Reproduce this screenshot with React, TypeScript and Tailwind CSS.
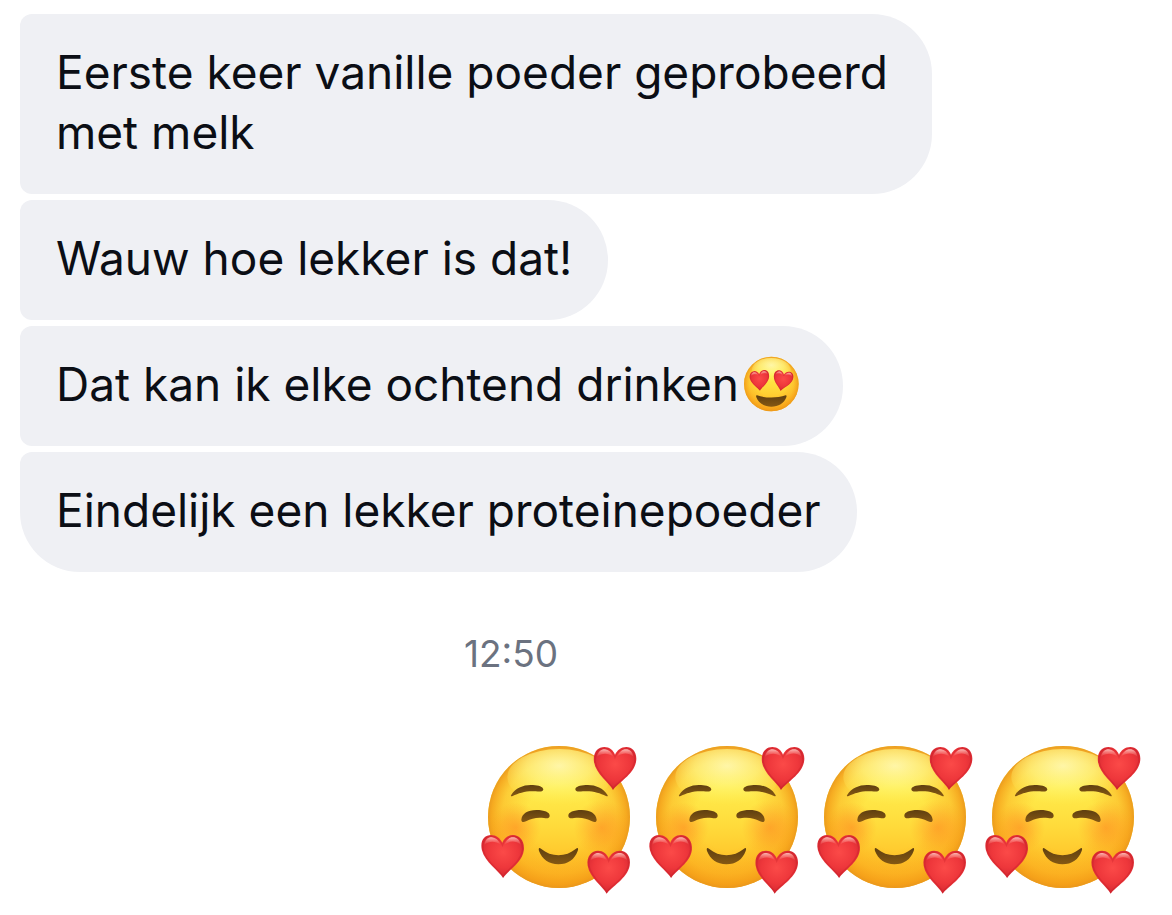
import type { ReactNode } from 'react';

function Heart({ transform }: { transform: string }) {
  return (
    <g transform={transform}>
      <path
        d="M58 129C48 108 7 82 1 45C-3 16 13 0 32 0C48 0 59 10 64 23C70 10 82 0 98 0C117 0 132 17 127 45C120 83 72 108 58 129Z"
        fill="url(#heartFill)"
      />
      <path
        d="M58 124C49 105 10 80 5 45C2 18 15 4 32 4C48 4 59 16 64 31C70 16 82 4 98 4C114 4 126 18 123 45C116 81 71 105 58 124Z"
        fill="none"
        stroke="#b9141f"
        strokeOpacity=".25"
        strokeWidth="4"
      />
      <path d="M10 29C14 12 24 6 34 7C45 8 53 16 58 28C43 18 26 17 10 29Z" fill="url(#heartShine)" />
      <path d="M71 28C76 15 86 7 97 7C108 7 116 14 119 29C105 17 87 17 71 28Z" fill="url(#heartShine)" />
    </g>
  );
}

function EmojiPaints() {
  return (
    <svg className="absolute size-0" aria-hidden="true">
      <defs>
        <linearGradient id="faceFill" x1="0" y1="0" x2="0" y2="1">
          <stop offset="0" stopColor="#fff06a" />
          <stop offset=".3" stopColor="#ffec4c" />
          <stop offset=".55" stopColor="#ffdc3c" />
          <stop offset=".78" stopColor="#ffc72c" />
          <stop offset="1" stopColor="#fbb020" />
        </linearGradient>
        <radialGradient id="faceEdge">
          <stop offset=".45" stopColor="#f9a51c" stopOpacity="0" />
          <stop offset=".8" stopColor="#f9a21a" stopOpacity=".4" />
          <stop offset=".95" stopColor="#f39a16" stopOpacity=".78" />
          <stop offset="1" stopColor="#e8951c" stopOpacity=".92" />
        </radialGradient>
        <radialGradient id="faceShine" cx=".5" cy=".3" r=".7">
          <stop offset="0" stopColor="#fffbb8" stopOpacity=".85" />
          <stop offset=".45" stopColor="#fff888" stopOpacity=".65" />
          <stop offset="1" stopColor="#fff25c" stopOpacity="0" />
        </radialGradient>
        <radialGradient id="blush">
          <stop offset="0" stopColor="#ff8420" stopOpacity=".55" />
          <stop offset=".5" stopColor="#ff8c20" stopOpacity=".32" />
          <stop offset="1" stopColor="#ff9d20" stopOpacity="0" />
        </radialGradient>
        <linearGradient id="feature" x1="0" y1="0" x2="0" y2="1">
          <stop offset="0" stopColor="#5f3f10" />
          <stop offset="1" stopColor="#855813" />
        </linearGradient>
        <radialGradient id="heartFill" cx=".5" cy=".4" r=".65">
          <stop offset="0" stopColor="#fb4a48" />
          <stop offset=".55" stopColor="#ee373b" />
          <stop offset="1" stopColor="#cf2530" />
        </radialGradient>
        <linearGradient id="heartShine" x1="0" y1="0" x2="0" y2="1">
          <stop offset="0" stopColor="#ffd9d3" stopOpacity=".8" />
          <stop offset="1" stopColor="#ff8880" stopOpacity=".1" />
        </linearGradient>
      </defs>
    </svg>
  );
}

function HeartEyes() {
  return (
    <svg viewBox="0 0 168 168" className="mr-2 ml-1 size-14 shrink-0" role="img" aria-label="Hartjesogen">
      <circle cx="85" cy="84" r="82" fill="url(#faceFill)" />
      <circle cx="85" cy="84" r="82" fill="url(#faceEdge)" />
      <ellipse cx="85" cy="42" rx="58" ry="36" fill="url(#faceShine)" />
      <Heart transform="translate(18 47) rotate(-6) scale(.46 .47)" />
      <Heart transform="translate(95 41) rotate(8) scale(.46 .47)" />
      <path d="M42 118C68 127 102 127 128 118C131 117 131 121 130 124C124 142 106 152 85 152C64 152 46 142 40 124C39 121 39 117 42 118Z" fill="url(#feature)" />
    </svg>
  );
}

function SmilingHearts() {
  return (
    <svg viewBox="0 0 504 504" className="size-42 shrink-0" role="img" aria-label="Glimlach met hartjes">
      <circle cx="252" cy="246" r="213" fill="url(#faceFill)" />
      <circle cx="252" cy="246" r="213" fill="url(#faceEdge)" />
      <ellipse cx="252" cy="126" rx="155" ry="84" fill="url(#faceShine)" />
      <circle cx="122" cy="278" r="76" fill="url(#blush)" />
      <circle cx="380" cy="278" r="84" fill="url(#blush)" />
      <path d="M109 179C122 158 148 148 174 150C191 151 204 155 205 163C205 171 195 170 182 169C153 167 132 174 113 183C108 185 106 184 109 179Z" fill="url(#feature)" />
      <path d="M397 179C384 158 358 148 332 150C315 151 301 155 301 163C301 171 311 170 324 169C353 167 374 174 393 183C398 185 400 184 397 179Z" fill="url(#feature)" />
      <path d="M139 254C141 236 158 225 184 225C209 225 224 232 224 242C224 251 215 250 207 249C186 246 170 250 153 259C145 263 139 262 139 254Z" fill="url(#feature)" />
      <path d="M365 254C363 236 346 225 320 225C295 225 280 232 280 242C280 251 289 250 297 249C318 246 334 250 351 259C359 263 365 262 365 254Z" fill="url(#feature)" />
      <path d="M198 341C229 367 272 367 303 341C309 336 311 341 308 348C299 373 279 388 250 388C222 388 201 372 192 348C190 340 192 336 198 341Z" fill="url(#feature)" />
      <Heart transform="translate(356 36)" />
      <Heart transform="matrix(1 0 .08 1 16 300)" />
      <Heart transform="translate(337 347)" />
    </svg>
  );
}

function Bubble({ children, last = false }: { children: ReactNode; last?: boolean }) {
  return (
    <div
      className={`flex max-w-[912px] items-center rounded-r-[60px] rounded-tl-xl bg-[#eff0f4] px-9 pt-7 pb-8 ${
        last ? 'rounded-bl-[60px]' : 'rounded-bl-xl'
      }`}
    >
      {children}
    </div>
  );
}

export default function App() {
  return (
    <main className="bg-white pt-3.5 pb-3 font-['Inter',sans-serif] text-[46px] leading-[60px] text-[#0b0e15]">
      <EmojiPaints />
      <section className="flex flex-col items-start gap-1.5 px-5">
        <Bubble>
          <p>Eerste keer vanille poeder geprobeerd met melk</p>
        </Bubble>
        <Bubble>
          <p>Wauw hoe lekker is dat!</p>
        </Bubble>
        <Bubble>
          <p>Dat kan ik elke ochtend drinken</p>
          <HeartEyes />
        </Bubble>
        <Bubble last>
          <p>Eindelijk een lekker proteinepoeder</p>
        </Bubble>
      </section>
      <time className="mt-[58px] block pr-[150px] text-center text-[37px] leading-12 text-[#6b7280]">12:50</time>
      <section className="mt-[57px] flex justify-end pr-[25px]">
        <SmilingHearts />
        <SmilingHearts />
        <SmilingHearts />
        <SmilingHearts />
      </section>
    </main>
  );
}
